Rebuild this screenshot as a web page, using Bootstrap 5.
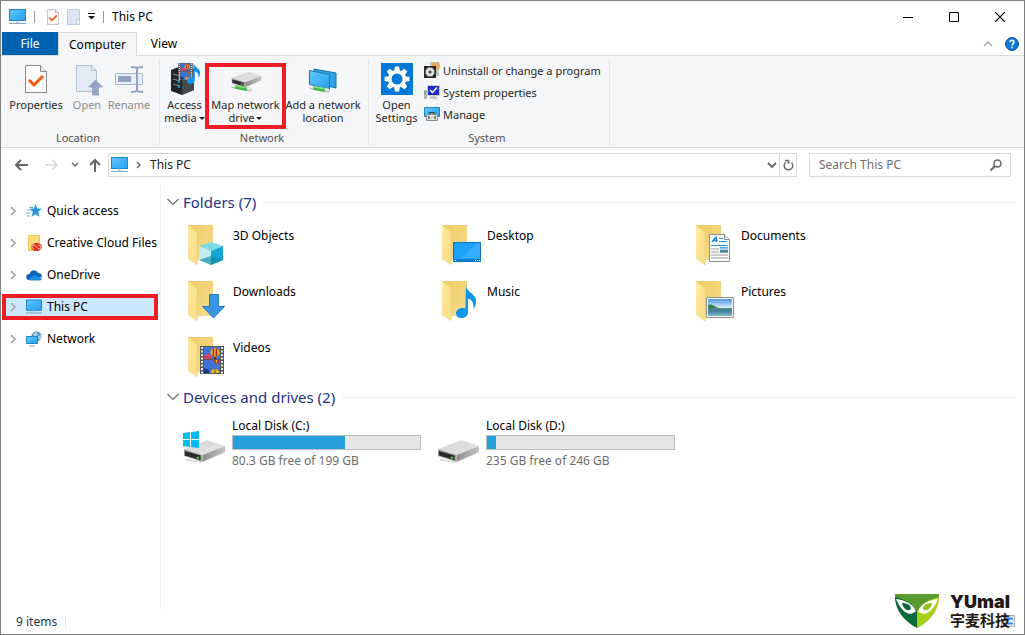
<!DOCTYPE html>
<html lang="en">
<head>
<meta charset="utf-8">
<meta name="viewport" content="width=device-width, initial-scale=1">
<title>This PC</title>
<link href="https://cdn.jsdelivr.net/npm/bootstrap@5.3.0/dist/css/bootstrap.min.css" rel="stylesheet">
<style>
  body { font-family: "Noto Sans", "Open Sans", sans-serif; font-size: 12px; line-height: 16px; color: #000; background: #fff; }
  button { font: inherit; color: inherit; background: none; border: 0; padding: 0; }
  a { color: inherit; text-decoration: none; }
  svg { display: block; flex: none; }
  .window { min-height: 100vh; border: 1px solid #7f7f7f; }
  .titlebar { height: 31px; padding: 0 1px 0 8px; }
  .sep { width: 1px; height: 12px; background: #9a9a9a; }
  .winbtn { width: 46px; height: 31px; display: grid; place-items: center; }
  .tabstrip { height: 24px; border-bottom: 1px solid #dadbdc; padding: 0 1px; }
  .tabstrip .tab { height: 23px; display: grid; place-items: center; }
  .tab-file { width: 56px; background: #0063b1; color: #fff; }
  .tabstrip .tab-on { width: 79px; height: 24px; background: #f5f6f7; border: 1px solid #dadbdc; border-bottom: 0; }
  .tab-view { width: 54px; }
  .ribbon { height: 92px; background: #f5f6f7; border-bottom: 1px solid #dadbdc; color: #262626; font-size: 11px; line-height: 13px; }
  .group { border-right: 1px solid #e2e3e4; margin: 3px 0 2px; padding: 0 8px 0 4px; }
  .group-name { color: #505050; line-height: 15px; height: 15px; }
  .tool { height: 66px; padding-top: 3px; display: flex; flex-direction: column; align-items: center; white-space: nowrap; }
  .tool svg.big { margin-bottom: 2px; }
  .dim { color: #8b8b8b; }
  .w-prop { width: 62px; } .w-open { width: 40px; } .w-ren { width: 44px; }
  .w-acc { width: 41px; } .w-add { width: 74px; } .w-set { width: 47px; }
  .tool.marked { width: 81px; padding-top: 0; border: 4px solid #ee1c25; margin: 4px 0 0; }
  .caret { display: inline-block; border: 3px solid transparent; border-top-color: #222; border-bottom: 0; vertical-align: 2px; margin-left: 2px; }
  .line-tool { height: 22px; display: flex; align-items: center; gap: 3px; }
  .address { height: 34px; padding: 5px 13px 6px 12px; gap: 12px; color: #222; }
  .box { border: 1px solid #d9d9d9; height: 24px; }
  .crumbs { padding-left: 2px; margin-left: -7px; }
  .crumbs a { margin-left: 9px; }
  .search { width: 202px; }
  .search input { border: 0; outline: 0; padding: 0 0 0 9px; min-width: 0; color: #222; background: none; }
  .search input::placeholder { color: #6d6d6d; opacity: 1; }
  .refresh { width: 17px; border-left: 1px solid #d9d9d9; display: grid; place-items: center; }
  .tree { width: 160px; border-right: 1px solid #f2f2f2; padding: 13px 2px 0 1px; overflow: hidden; }
  .tree li { padding: 3px 0; }
  .node { display: flex; align-items: center; height: 26px; padding-left: 8px; white-space: nowrap; overflow: hidden; }
  .node svg + svg { margin: 0 5px 0 10px; }
  .node.on { background: #cce8ff; border: 4px solid #ee1c25; padding-left: 4px; }
  .pane { padding: 9px 8px 0 6px; }
  .sect { gap: 4px; color: #1e3287; }
  .sect hr { margin: 0 0 0 3px; color: #b8b8b8; }
  .sect h2 { font-size: 15px; font-weight: 400; line-height: 22px; margin: 0; }
  .tiles { display: grid; grid-template-columns: repeat(auto-fill, 254px); row-gap: 8px; padding-left: 16px; }
  .tile { display: flex; height: 48px; gap: 6px; }
  .tile span { padding-top: 6px; }
  .folders { padding-top: 9px; }
  .drive { display: flex; gap: 5px; width: 238px; padding-top: 10px; color: #6d6d6d; }
  .drive .progress { height: 15px; border-radius: 0; border: 1px solid #bcbcbc; background: #e6e6e6; margin: 1px 0 3px; }
  .drive .progress-bar { background: #26a0da; }
  .status { height: 25px; padding-left: 15px; color: #1d3150; gap: 8px; }
  .brand { position: absolute; right: 14px; bottom: 6px; gap: 11px; color: #231815; }
  .brand b { display: block; font: 900 18px/18px Inter, sans-serif; }
  .brand i { display: block; font: 700 15px/17px "Noto Sans CJK SC", sans-serif; }
  .viewbox { position: absolute; right: 9px; bottom: 7px; }
</style>
</head>
<body>
<svg width="0" height="0" class="position-absolute">
  <defs>
    <linearGradient id="scr" x1="0" y1="0" x2="1" y2="1"><stop offset="0" stop-color="#6ac8fb"/><stop offset=".5" stop-color="#41b3f6"/><stop offset="1" stop-color="#2b9fe9"/></linearGradient>
    <linearGradient id="fb" x1="0" y1="0" x2="1" y2="1"><stop offset="0" stop-color="#eecb66"/><stop offset="1" stop-color="#f7dc8b"/></linearGradient>
    <linearGradient id="ff" x1="0" y1="0" x2="1" y2="1"><stop offset="0" stop-color="#ffe8a0"/><stop offset="1" stop-color="#fcdd83"/></linearGradient>
    <linearGradient id="dt" x1="0" y1="0" x2="1" y2="1"><stop offset="0" stop-color="#d2d2d4"/><stop offset="1" stop-color="#e8e8ea"/></linearGradient>
    <linearGradient id="ds" x1="0" y1="0" x2="1" y2="0"><stop offset="0" stop-color="#8e8e90"/><stop offset="1" stop-color="#c2c2c4"/></linearGradient>
    <linearGradient id="sky" x1="0" y1="0" x2="0" y2="1"><stop offset="0" stop-color="#4e94dc"/><stop offset=".5" stop-color="#d5ecf8"/><stop offset=".55" stop-color="#4c8a7c"/><stop offset=".68" stop-color="#3f7a9a"/><stop offset="1" stop-color="#83b7d4"/></linearGradient>
    <symbol id="pc" viewBox="0 0 16 15"><path d="M.5.5h15v10.300H.5z" fill="url(#scr)" stroke="#1f85c9"/><path d="M7 11h2v2H7z" fill="#b7cfdf"/><path d="M0 13.500h16" stroke="#7fa0b6"/></symbol>
    <symbol id="chev" viewBox="0 0 6 10"><path d="M1 1l4 4-4 4" fill="none" stroke="#a6a6a6" stroke-width="1.600"/></symbol>
    <symbol id="down" viewBox="0 0 12 8"><path d="M.5 1L6 6.500 11.500 1" fill="none" stroke="#6e6e6e" stroke-width="1.200"/></symbol>
    <symbol id="folder" viewBox="0 0 44 44"><path d="M5 3h25v35H12z" fill="url(#fb)"/><path d="M12 34l4 2-3 7z" fill="#ddd"/><path d="M5 3l9 7v33L5 37z" fill="url(#ff)"/><path d="M5 3l9 7v33" fill="none" stroke="#efcf77" stroke-width=".6"/></symbol>
    <symbol id="disk" viewBox="0 0 44 24"><path d="M3 21l16 2 24-11" stroke="#ddd" stroke-width="2" fill="none"/><path d="M1 10L25 1l18 6-23 9z" fill="url(#dt)"/><path d="M20 16L43 7v6L20 23z" fill="url(#ds)"/><path d="M1 10l19 6v7L1 17z" fill="#a2a2a4"/><path d="M2 12l16 4.500v5L2 16.500z" fill="#2b2b2d"/><path d="M14 17.500l2.500.7v2L14 19.500z" fill="#39e43d"/></symbol>
    <symbol id="cable" viewBox="0 0 30 12"><path d="M4 4l22 4" stroke="#b9bbbb" stroke-width="5" stroke-linecap="round"/><path d="M3 3l23 4" stroke="#eee" stroke-width="3" stroke-linecap="round"/><path d="M7 2l15 3v5L7 7z" fill="#3fb54a"/><path d="M7 2l15 3v2L7 4z" fill="#83dc7f"/></symbol>
    <symbol id="check" viewBox="0 0 22 28"><path d="M.5.500h15l6 6v21H.5z" fill="#fbfbfb" stroke="#8a8a8a"/><path d="M15.500.500v6h6" fill="#eee" stroke="#8a8a8a"/><path d="M4 15l5 5 9-9" fill="none" stroke="#f05a14" stroke-width="3"/></symbol>
    <symbol id="film" viewBox="0 0 24 28"><path d="M0 0h24v28H0z" fill="#565656"/><path d="M2 1v27M22 1v27" stroke="#e6e6e6" stroke-width="2" stroke-dasharray="2 1.500"/><path d="M4 1h16v12H4zM4 14h16v13H4z" fill="#3f74d2"/><path d="M4 10l5-3 4 6H4z" fill="#d34269"/><circle cx="15" cy="6.500" r="4.500" fill="#e8b21c"/><path d="M13.500 2.500v8M16.500 2.500v8" stroke="#a52024" stroke-width="1.500"/><path d="M14 11h2v2h-2z" fill="#5b3311"/><path d="M13 14h7l-3.500 5z" fill="#b32830"/><path d="M15.500 14h2l-1 4z" fill="#edbb22"/><path d="M4 22l5 2v3H4z" fill="#1c397f"/><path d="M11 27a4 4 0 0 1 8 0z" fill="#edbb22"/><path d="M15 23v4" stroke="#ae2b2a"/></symbol>
    <symbol id="note" viewBox="0 0 22 32"><path d="M11 0c1 7 11 8 10 16-.3 3-1 5-2.500 7 .5-6-1-9-5.500-10.500V26c0 4-3 6-7 6-3 0-5-2-5-4.500C1 24 5 21 10.500 22.500z" fill="#0c96ec"/></symbol>
  </defs>
</svg>

<div class="window d-flex flex-column position-relative">
  <header class="titlebar d-flex align-items-center">
    <svg width="17" height="16"><use href="#pc" width="17" height="16"/></svg>
    <span class="sep ms-2"></span>
    <button class="ms-2 ps-1" aria-label="Properties"><svg width="12" height="16"><use href="#check" width="12" height="16"/></svg></button>
    <button class="ms-2" aria-label="New folder"><svg width="13" height="16"><path d="M.5.500h12v10h-3v5h-9z" fill="#dbe5f3" stroke="#bccbe0"/><path d="M9.500 10.500h3v5h-3z" fill="#eef3fa" stroke="#bccbe0"/></svg></button>
    <button class="ms-2" aria-label="Customize toolbar"><svg width="7" height="7"><path d="M0 .5h7" stroke="#111"/><path d="M0 3h7L3.500 6.500z" fill="#111"/></svg></button>
    <span class="sep mx-2"></span>
    <span>This PC</span>
    <div class="d-flex ms-auto">
      <button class="winbtn" aria-label="Minimize"><svg width="10" height="10"><path d="M0 5.500h10" stroke="#000"/></svg></button>
      <button class="winbtn" aria-label="Maximize"><svg width="10" height="10"><path d="M.5.500h9v9h-9z" fill="none" stroke="#000"/></svg></button>
      <button class="winbtn" aria-label="Close"><svg width="10" height="10"><path d="M0 0l10 10M10 0L0 10" stroke="#000" stroke-width="1.200"/></svg></button>
    </div>
  </header>

  <nav class="tabstrip d-flex">
    <button class="tab tab-file">File</button>
    <button class="tab tab-on">Computer</button>
    <button class="tab tab-view">View</button>
    <div class="d-flex align-items-center ms-auto gap-2 pe-1">
      <button class="me-1" aria-label="Collapse ribbon"><svg width="10" height="6"><path d="M1 5l4-4 4 4" fill="none" stroke="#a0a0a0" stroke-width="1.300"/></svg></button>
      <button aria-label="Help"><svg width="14" height="14"><circle cx="7" cy="7" r="6.500" fill="#0f78d4" stroke="#085ba8"/><path d="M5 5.200c.2-2.600 4.200-2.400 4 0-.1 1.400-2 1.500-2 3.300M7 9.700v1.600" fill="none" stroke="#fff" stroke-width="1.500"/></svg></button>
    </div>
  </nav>

  <div class="ribbon d-flex text-center">
    <section class="group d-flex flex-column justify-content-between">
      <div class="d-flex">
        <button class="tool w-prop"><svg class="big" width="32" height="34" viewBox="0 0 32 34"><use href="#check" x="5" y="3" width="22" height="28"/></svg>Properties</button>
        <button class="tool w-open dim"><svg class="big" width="32" height="34"><path d="M5.500 3.500h15l5 5v21h-20z" fill="#e2eaf5" stroke="#b4c1d5"/><path d="M20.500 3.500v5h5" fill="none" stroke="#b4c1d5"/><path d="M24.500 18l7 7h-4v8h-6v-8h-4z" fill="#92a6c4" stroke="#7f96b7" stroke-width=".6"/></svg>Open</button>
        <button class="tool w-ren dim"><svg class="big" width="32" height="34"><path d="M2.500 11.500h27v11h-27z" fill="#e8eef7" stroke="#a5b5cd"/><path d="M5 14h13v6H5z" fill="#8fa3c3"/><path d="M18 5c4 0 5 0 6 1.500C25 5 26 5 30 5M24 6v23M18 30c4 0 5 0 6-1.500 1 1.500 2 1.500 6 1.500" fill="none" stroke="#8fa3c3" stroke-width="2"/></svg>Rename</button>
      </div>
      <div class="group-name">Location</div>
    </section>
    <section class="group d-flex flex-column justify-content-between">
      <div class="d-flex">
        <button class="tool w-acc"><svg class="big" width="32" height="34"><path d="M2 8l10-4 13 3v21l-12 5-11-4z" fill="#222529"/><path d="M13 10l12-3v21l-12 5z" fill="#45494e"/><path d="M4 12l7 2M4 17l7 2M4 22l7 2" stroke="#8c949b"/><path d="M9 15h2M9 20h2M9 25h2" stroke="#21b8f4" stroke-width="1.500"/><use href="#film" x="9" y="1" width="15" height="17"/><use href="#note" x="17" y="1" width="15" height="21"/></svg>Access<span>media<span class="caret"></span></span></button>
        <button class="tool marked"><svg class="big" width="32" height="29"><use href="#disk" x="1" y="4" width="31" height="17"/><use href="#cable" x="0" y="16" width="23" height="10"/></svg>Map network<span>drive<span class="caret"></span></span></button>
        <button class="tool w-add"><svg class="big" width="32" height="34"><path d="M7 7l22 4v15L7 21z" fill="#2da2e7" stroke="#19719f"/><path d="M2.500 8.500l20 4v15l-20-5z" fill="url(#scr)" stroke="#2377a3"/><use href="#cable" x="1" y="22" width="23" height="10"/></svg><span>Add a network<br>location</span></button>
      </div>
      <div class="group-name">Network</div>
    </section>
    <section class="group d-flex flex-column justify-content-between">
      <div class="d-flex">
        <button class="tool w-set"><svg class="big" width="32" height="34"><path d="M0 1h32v32H0z" fill="#0078d7"/><g transform="translate(16 17)"><g fill="#fff"><path id="cog" d="M-2-12.500h4l1 5h-6zM-2 12.500h4l1-5h-6z"/><use href="#cog" transform="rotate(45)"/><use href="#cog" transform="rotate(90)"/><use href="#cog" transform="rotate(135)"/></g><circle r="7.200" fill="#0078d7" stroke="#fff" stroke-width="3.400"/></g></svg><span>Open<br>Settings</span></button>
        <div class="ps-1">
          <button class="line-tool"><svg width="16" height="16"><path d="M6 0h9v14H6z" fill="#bac8c2"/><circle cx="12" cy="4" r="4" fill="#eca55c"/><path d="M0 4h12v12H0z" fill="#2b2b2b"/><circle cx="6" cy="10" r="4.500" fill="#ddd"/><circle cx="6" cy="10" r="1.500" fill="#444"/></svg>Uninstall or change a program</button>
          <button class="line-tool"><svg width="16" height="16"><path d="M0 6h3v9H0z" fill="#b0b0b0"/><path d="M1 7v3" stroke="#38b549"/><path d="M3.500 1.500h12v10h-12z" fill="#1d2fc0" stroke="#d0d0c8"/><path d="M6 6l2.500 2.500L13 3.500" stroke="#fff" stroke-width="1.500" fill="none"/><path d="M7 12h5l2 3H5z" fill="#c5c5c5"/></svg>System properties</button>
          <button class="line-tool"><svg width="16" height="16"><path d="M.5 1.500h15v9H.5z" fill="url(#scr)" stroke="#1f85c9"/><path d="M2.500 8.500h11v6h-11z" fill="#ddd" stroke="#888"/><path d="M5.500 8V6.500h5V8M5 10v3M11 10v3" stroke="#444" fill="none" stroke-width="1.200"/></svg>Manage</button>
        </div>
      </div>
      <div class="group-name">System</div>
    </section>
  </div>

  <div class="address d-flex">
    <div class="d-flex align-items-center">
      <button aria-label="Back"><svg width="16" height="14"><path d="M15 7H3M8 2L3 7l5 5" fill="none" stroke="#666" stroke-width="2"/></svg></button>
      <button class="ms-3" aria-label="Forward"><svg width="14" height="14"><path d="M0 7h12M7 2l5 5-5 5" fill="none" stroke="#d5d5d5" stroke-width="1.500"/></svg></button>
      <button class="ms-2 ps-1" aria-label="Recent"><svg width="8" height="6"><path d="M1 1l3 3 3-3" fill="none" stroke="#666" stroke-width="1.500"/></svg></button>
      <button class="ms-2" aria-label="Up"><svg width="16" height="14"><path d="M8 14V2M3 7l5-5 5 5" fill="none" stroke="#666" stroke-width="2"/></svg></button>
    </div>
    <div class="box crumbs d-flex flex-grow-1 align-items-center">
      <svg width="17" height="16"><use href="#pc" width="17" height="16"/></svg>
      <svg class="ms-2" width="5" height="8"><path d="M1 1l3 3-3 3" fill="none" stroke="#666" stroke-width="1.500"/></svg>
      <a href="#">This PC</a>
      <button class="ms-auto" aria-label="Previous locations"><svg width="12" height="7"><path d="M1 1l4 4 4-4" fill="none" stroke="#666" stroke-width="1.800"/></svg></button>
      <button class="refresh h-100" aria-label="Refresh"><svg width="11" height="12"><path d="M3 3a4.300 4.300 0 1 0 5.500.500M2 1.500h3.500V5" fill="none" stroke="#6a6a6a" stroke-width="1.500"/></svg></button>
    </div>
    <label class="box search d-flex align-items-center pe-2">
      <input class="flex-grow-1" type="text" placeholder="Search This PC" aria-label="Search This PC">
      <svg width="12" height="12"><circle cx="7.500" cy="4.500" r="3.500" fill="none" stroke="#666" stroke-width="1.500"/><path d="M5 7L.5 11.500" stroke="#666" stroke-width="2"/></svg>
    </label>
  </div>

  <div class="d-flex flex-grow-1">
    <ul class="tree list-unstyled mb-0 flex-shrink-0">
      <li><a href="#" class="node"><svg width="6" height="10"><use href="#chev"/></svg><svg width="16" height="16"><path d="M9.500 1l1.700 4.500 4.600.200-3.500 3 1.200 5-4-2.800-4 2.800 1.400-5-3.500-3 4.500-.2z" fill="#2492df"/><path d="M0 10h4M1 7h3M1 13h3M3 4.500h4" stroke="#5db7ef"/></svg>Quick access</a></li>
      <li><a href="#" class="node"><svg width="6" height="10"><use href="#chev"/></svg><svg width="16" height="16"><path d="M2.500.500h11v15h-11z" fill="#fbdc7c" stroke="#efc858"/><ellipse cx="10.500" cy="12" rx="5.500" ry="4" fill="#e02b20"/><path d="M8 13.500a1.800 1.800 0 1 1 1-3l3 3a1.800 1.800 0 1 0 .5-3" fill="none" stroke="#fbe5c0"/></svg>Creative Cloud Files</a></li>
      <li><a href="#" class="node"><svg width="6" height="10"><use href="#chev"/></svg><svg width="16" height="12"><path d="M3.500 5a4.500 4.500 0 0 1 8.500-1 4 4 0 0 1 4 4l-8 2-5 1H3a3 3 0 0 1 .5-6z" fill="#0b65bd"/><path d="M2 10.500l6-4.500 8 3.500a2.600 2.600 0 0 1-3 2H4z" fill="#1e8fe0"/></svg>OneDrive</a></li>
      <li><a href="#" class="node on"><svg width="6" height="10"><use href="#chev"/></svg><svg width="16" height="16"><use href="#pc" width="16" height="16"/></svg>This PC</a></li>
      <li><a href="#" class="node"><svg width="6" height="10"><use href="#chev"/></svg><svg width="16" height="16"><circle cx="10.500" cy="5.500" r="5" fill="#4a93bd"/><path d="M7 3l3-2 2 2-3 3zM12 5l3-1v4l-2 1z" fill="#b4d5df"/><path d="M.5 5.500h11v7H.5z" fill="url(#scr)" stroke="#1f85c9"/><path d="M3 15h6" stroke="#7fa0b6"/></svg>Network</a></li>
    </ul>

    <main class="pane flex-grow-1">
      <div class="sect d-flex align-items-center"><svg width="12" height="8"><use href="#down"/></svg><h2>Folders (7)</h2><hr class="flex-grow-1"></div>
      <div class="tiles folders">
        <a href="#" class="tile"><svg width="44" height="44"><use href="#folder"/><path d="M16 24l12-4 12 4-12 5z" fill="#7fdbe5"/><path d="M16 24l12 5v14l-12-5z" fill="#bdeef2"/><path d="M28 29l12-5v14l-12 5z" fill="#18a5d4"/><path d="M16 38l12-4 12 4-12 5z" fill="#0c8ba3" opacity=".65"/></svg><span>3D Objects</span></a>
        <a href="#" class="tile"><svg width="44" height="44"><use href="#folder"/><path d="M16.500 20.500h27v19h-27z" fill="#1da1fb" stroke="#0b74bf"/><path d="M24 36L40 21h3v15z" fill="#4cb7ff" opacity=".5"/><path d="M17 38h26" stroke="#0b5f9e"/><path d="M18 38.500h1M38 38.500h1M40 38.500h1M42 38.500h1" stroke="#fff"/></svg><span>Desktop</span></a>
        <a href="#" class="tile"><svg width="44" height="44"><use href="#folder"/><path d="M18.500 12.500h15l5 5v22h-20z" fill="#fff" stroke="#8c8c8c"/><path d="M33.500 12.500v5h5" fill="#eee" stroke="#8c8c8c"/><path d="M21 20l4-5 1 5M22 18.500h4" fill="none" stroke="#1882c8" stroke-width="1.400"/><path d="M28 16.500h4M28 19.500h8M20 23.500h17" stroke="#2391d8" stroke-width="1.200"/><path d="M20 27h8M20 30h8M20 33h17M20 36h17" stroke="#999"/><path d="M29 25h8v6h-8z" fill="url(#sky)"/></svg><span>Documents</span></a>
        <a href="#" class="tile"><svg width="44" height="44"><use href="#folder"/><path d="M26.500 16.500h9v12h6L30.500 40 19.500 28.500h7z" fill="#3c96e4" stroke="#2275c0"/></svg><span>Downloads</span></a>
        <a href="#" class="tile"><svg width="44" height="44"><use href="#folder"/><use href="#note" x="18" y="8" width="22" height="32"/></svg><span>Music</span></a>
        <a href="#" class="tile"><svg width="44" height="44"><use href="#folder"/><path d="M15.500 19.500h27v20h-27z" fill="#fff" stroke="#8c8c8c"/><path d="M17 21h24v17H17z" fill="url(#sky)"/><path d="M17 27c4-2 7 2 11 3H17z" fill="#3f7d45"/></svg><span>Pictures</span></a>
        <a href="#" class="tile"><svg width="44" height="44"><use href="#folder"/><use href="#film" x="17" y="12" width="24" height="28"/></svg><span>Videos</span></a>
      </div>
      <div class="sect d-flex align-items-center mt-1"><svg width="12" height="8"><use href="#down"/></svg><h2>Devices and drives (2)</h2><hr class="flex-grow-1"></div>
      <div class="tiles">
        <div class="drive"><svg class="mt-1" width="44" height="44"><use href="#disk" y="17" width="43" height="24"/><path d="M0 11l7-1v7H0zM8 10l8-1v8H8zM0 18h7v7l-7-1zM8 18h8v8l-8-1z" fill="#00bcf2"/></svg>
          <div class="flex-grow-1"><div class="text-black">Local Disk (C:)</div><div class="progress" role="progressbar" aria-label="Local Disk (C:)"><div class="progress-bar" style="width:60%"></div></div>80.3 GB free of 199 GB</div></div>
        <div class="drive"><svg class="mt-1" width="44" height="44"><use href="#disk" y="17" width="43" height="24"/></svg>
          <div class="flex-grow-1"><div class="text-black">Local Disk (D:)</div><div class="progress" role="progressbar" aria-label="Local Disk (D:)"><div class="progress-bar" style="width:5%"></div></div>235 GB free of 246 GB</div></div>
      </div>
    </main>
  </div>

  <footer class="status d-flex align-items-center">9 items<span class="sep opacity-25"></span></footer>

  <svg class="viewbox" width="14" height="12"><path d="M.5.500h13v11H.5z" fill="#e6f2fc" stroke="#aaa"/><path d="M5 3.500h7M5 8.500h7" stroke="#2c8ae0" stroke-width="2"/></svg>
  <div class="brand d-flex align-items-center">
    <svg width="44" height="34" viewBox="0 0 44 34"><path d="M0 0h44c0 16-9 27-22 34C9 27 0 16 0 0z" fill="#5b9a31"/><path d="M0 3c9 2 17 6 22 14v17C9 27 0 16 0 3z" fill="#0c6b39"/><path d="M44 3c-9 2-17 6-22 14v17C35 27 44 16 44 3z" fill="#a9cf12"/><path d="M1 5c9 1 17 5 20 12-6 6-14 2-20-12zM43 5c-9 1-17 5-20 12 6 6 14 2 20-12z" fill="#fff"/><path d="M7 9c5 0 9 2 9 6-3 3-8 0-9-6z" fill="#0c6b39"/><path d="M37 9c-5 0-9 2-9 6 3 3 8 0 9-6z" fill="#8dbf1a"/></svg>
    <div><b>YUmaI</b><i>宇麦科技</i></div>
  </div>
</div>
<script src="https://cdn.jsdelivr.net/npm/bootstrap@5.3.0/dist/js/bootstrap.bundle.min.js"></script>
</body>
</html>
